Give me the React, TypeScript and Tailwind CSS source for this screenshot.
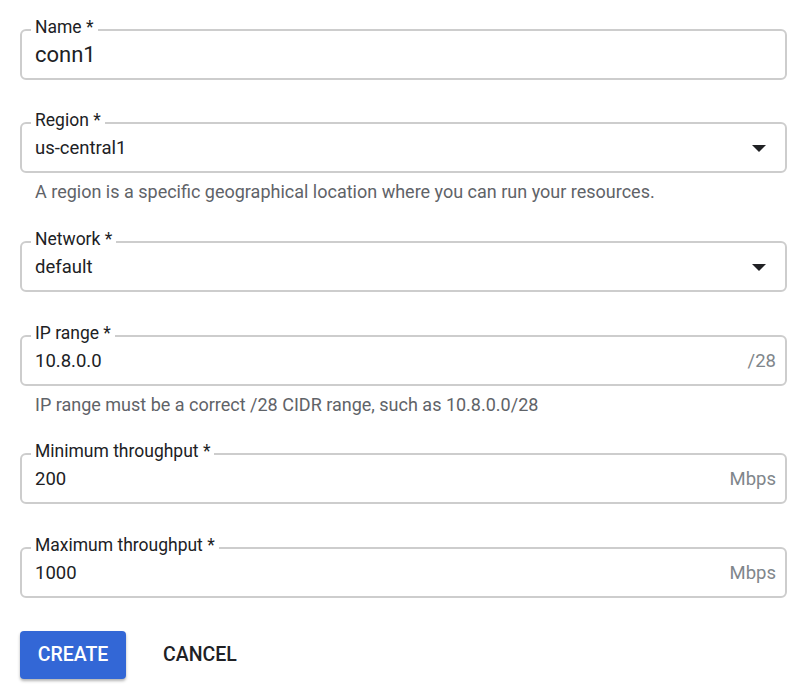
import { ReactNode } from "react"

function Field({
  label,
  value,
  big,
  suffix,
  select,
}: {
  label: string
  value: string
  big?: boolean
  suffix?: string
  select?: boolean
}) {
  return (
    <fieldset className="m-0 min-w-0 rounded-[6px] border-2 border-[#cdcdcd] pl-[9px] pr-[9px] pb-[11px]">
      <legend className="px-1 pb-[6px] text-[17.5px] leading-[20px] text-[#202124]">{label}</legend>
      <div className="flex items-center justify-between pl-1">
        <span className={`${big ? "text-[22px]" : "text-[18.5px]"} leading-[24px] text-[#202124]`}>{value}</span>
        {suffix && <span className="text-[18.5px] leading-[24px] text-[#80868b]">{suffix}</span>}
        {select && (
          <svg width="14" height="7" viewBox="0 0 14 7" className="mr-[10px]">
            <path d="M0 0 L14 0 L7 7 Z" fill="#202124" />
          </svg>
        )}
      </div>
    </fieldset>
  )
}

function Helper({ children }: { children: ReactNode }) {
  return <p className="mt-[9px] pl-[15px] text-[18px] leading-[20px] text-[#5f6368]">{children}</p>
}

export default function App() {
  return (
    <div className="min-h-screen bg-white pl-5 pr-[19px] pt-[17px]" style={{ fontFamily: "Roboto, 'Noto Sans', sans-serif" }}>
      <Field label="Name *" value="conn1" big />

      <div className="mt-[30px]">
        <Field label="Region *" value="us-central1" select />
        <Helper>A region is a specific geographical location where you can run your resources.</Helper>
      </div>

      <div className="mt-[27px]">
        <Field label="Network *" value="default" select />
      </div>

      <div className="mt-[31px]">
        <Field label="IP range *" value="10.8.0.0" suffix="/28" />
        <Helper>IP range must be a correct /28 CIDR range, such as 10.8.0.0/28</Helper>
      </div>

      <div className="mt-[26px]">
        <Field label="Minimum throughput *" value="200" suffix="Mbps" />
      </div>

      <div className="mt-[31px]">
        <Field label="Maximum throughput *" value="1000" suffix="Mbps" />
      </div>

      <div className="mt-[33px] flex items-center">
        <button className="h-[48px] w-[106px] rounded-[4px] bg-[#3367d6] text-[19.5px] font-medium text-white shadow-[0_2px_3px_rgba(0,0,0,0.3)]">
          CREATE
        </button>
        <button className="ml-[21px] px-4 text-[19.5px] font-medium text-[#202124]">CANCEL</button>
      </div>
    </div>
  )
}
